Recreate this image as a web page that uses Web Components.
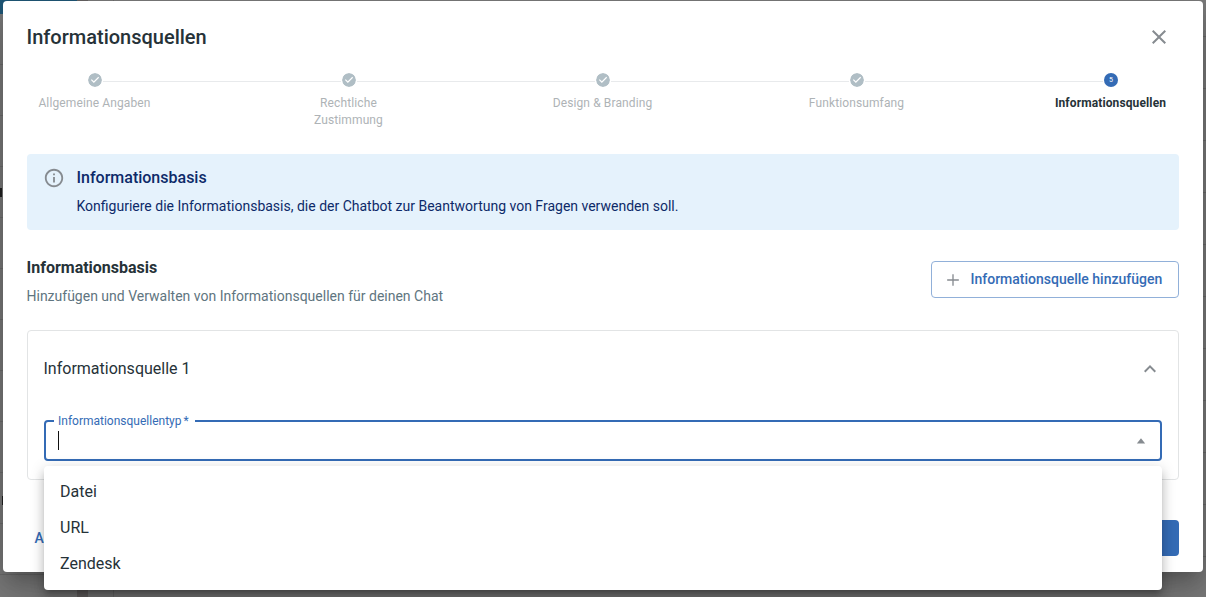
<!DOCTYPE html>
<html lang="de">
<head>
  <meta charset="utf-8">
  <title>Informationsquellen</title>
  <style>
    html, body {
      margin: 0;
      height: 100%;
      overflow: hidden;
    }

    body {
      font-family: Roboto, "Liberation Sans", sans-serif;
      color: #263238;
      --primary: #346bb5;
      --icon: #868b90;
    }
  </style>
</head>
<body>
  <page-backdrop>
    <modal-dialog heading="Informationsquellen">
      <step-progress>
        <step-item>Allgemeine Angaben</step-item>
        <step-item>Rechtliche Zustimmung</step-item>
        <step-item>Design &amp; Branding</step-item>
        <step-item>Funktionsumfang</step-item>
        <step-item number="5">Informationsquellen</step-item>
      </step-progress>
      <info-alert heading="Informationsbasis">Konfiguriere die Informationsbasis, die der Chatbot zur Beantwortung von Fragen verwenden soll.</info-alert>
      <section-header heading="Informationsbasis">
        Hinzufügen und Verwalten von Informationsquellen für deinen Chat
        <add-button slot="action">Informationsquelle hinzufügen</add-button>
      </section-header>
      <source-panel heading="Informationsquelle 1">
        <select-field label="Informationsquellentyp *">
          <menu-option>Datei</menu-option>
          <menu-option>URL</menu-option>
          <menu-option>Zendesk</menu-option>
        </select-field>
      </source-panel>
      <dialog-actions slot="footer">A</dialog-actions>
    </modal-dialog>
  </page-backdrop>

  <script>
    /**
     * Base class, renders the markup of the element in its shadow root
     */
    class BaseElement extends HTMLElement {
      connectedCallback() {
        if (this.shadowRoot) return;
        this.attachShadow({ mode: "open" });
        this.shadowRoot.innerHTML = this.render();
      }
    }

    /**
     * Dimmed page that lies behind the dialog
     */
    class PageBackdrop extends BaseElement {
      render() {
        return `
          <style>
            :host {
              display: block;
              position: relative;
              box-sizing: border-box;
              height: 597px;
              padding: 1px 3px 0;
              overflow: hidden;
              background: #7c7c7c;
            }

            .page {
              position: absolute;
              inset: 0;
              display: grid;
              grid-template-columns: 77px 11px 26px 1fr 3px;
            }

            .nav {
              background: repeating-linear-gradient(#7c7c7c 0 50px, #6e6e6e 50px 51px);
              border-top: 14px solid #205878;
            }

            .gutter {
              background: #686565;
            }

            .rail {
              border-right: 1px solid #6f6f6f;
            }

            .rows {
              grid-column: 5;
              background: repeating-linear-gradient(#7c7c7c 0 36px, #6a6a6a 36px 37px, #7c7c7c 37px 52px);
            }

            .mark {
              position: absolute;
              left: 0;
              width: 2px;
              height: 9px;
              background: #222;
            }
          </style>
          <div class="page">
            <div class="nav"></div>
            <div class="gutter"></div>
            <div class="rail"></div>
            <div></div>
            <div class="rows"></div>
            <i class="mark" style="top: 188px"></i>
            <i class="mark" style="top: 496px; left: 2px"></i>
          </div>
          <slot></slot>
        `;
      }
    }

    class ModalDialog extends BaseElement {
      render() {
        return `
          <style>
            :host {
              display: flex;
              flex-direction: column;
              position: relative;
              box-sizing: border-box;
              height: 571px;
              padding: 0 24px 16px;
              border-radius: 4px;
              background: #fff;
              box-shadow: 0 11px 15px -7px rgba(0,0,0,0.2), 0 24px 38px 3px rgba(0,0,0,0.14), 0 9px 46px 8px rgba(0,0,0,0.12);
            }

            header {
              display: flex;
              align-items: center;
              justify-content: space-between;
              height: 72px;
              padding-right: 8px;
            }

            h2 {
              margin: 0 0 0 -0.5px;
              font-size: 20px;
              font-weight: 500;
              line-height: 32px;
            }

            svg {
              width: 24px;
              height: 24px;
              fill: var(--icon);
            }

            footer {
              margin-top: auto;
            }
          </style>
          <header>
            <h2>${this.getAttribute("heading")}</h2>
            <svg viewBox="0 0 24 24"><path d="M19 6.41 17.59 5 12 10.59 6.41 5 5 6.41 10.59 12 5 17.59 6.41 19 12 13.41 17.59 19 19 17.59 13.41 12z"/></svg>
          </header>
          <slot></slot>
          <footer><slot name="footer"></slot></footer>
        `;
      }
    }

    class StepProgress extends BaseElement {
      render() {
        return `
          <style>
            :host {
              display: flex;
              justify-content: space-between;
              height: 81px;
            }
          </style>
          <slot></slot>
        `;
      }
    }

    /**
     * One step, it is active when it has a number and done otherwise
     */
    class StepItem extends BaseElement {
      render() {
        const number = this.getAttribute("number");
        const icon = number
          ? `<span class="number">${number}</span>`
          : `<svg viewBox="0 0 24 24"><path d="M12 0a12 12 0 1 0 0 24 12 12 0 0 0 0-24zm-2 17l-5-5 1.4-1.4 3.6 3.6 7.6-7.6L19 8l-9 9z"/></svg>`;
        return `
          <style>
            :host {
              display: flex;
              flex-direction: column;
              align-items: center;
              position: relative;
              box-sizing: border-box;
              width: 136px;
              padding: 0 8px;
              color: #aeb3b6;
              font-size: 12px;
              line-height: 17px;
              letter-spacing: 0.12px;
              text-align: center;
            }

            /* line back to the previous step */
            :host(:not(:first-child))::before {
              content: "";
              position: absolute;
              top: 8px;
              left: -178px;
              width: 238px;
              border-top: 1px solid #e8eaec;
            }

            :host([number]) {
              color: #263238;
              font-weight: 700;
            }

            svg, .number {
              width: 14px;
              height: 14px;
              margin-bottom: 8px;
              border-radius: 50%;
              fill: #b0bec5;
            }

            .number {
              background: var(--primary);
              color: #fff;
              font-size: 7px;
              font-weight: 400;
              line-height: 14px;
              letter-spacing: 0;
            }

            .label {
              max-width: 117px;
              margin-right: 1px;
            }
          </style>
          ${icon}
          <span class="label"><slot></slot></span>
        `;
      }
    }

    class InfoAlert extends BaseElement {
      render() {
        return `
          <style>
            :host {
              display: flex;
              gap: 12px;
              box-sizing: border-box;
              height: 76px;
              padding: 13px 16px;
              border-radius: 4px;
              background: #e5f2fc;
              color: #0d2a69;
              font-size: 14px;
              line-height: 20px;
            }

            svg {
              width: 22px;
              height: 22px;
              fill: var(--icon);
            }

            h3 {
              margin: 1px 0 8px;
              font-size: 16px;
              font-weight: 500;
              line-height: 20px;
            }

            div {
              margin-left: -0.5px;
            }
          </style>
          <svg viewBox="0 0 24 24"><path d="M11 7h2v2h-2zm0 4h2v6h-2zm1-9C6.48 2 2 6.48 2 12s4.48 10 10 10 10-4.48 10-10S17.52 2 12 2zm0 18c-4.41 0-8-3.59-8-8s3.59-8 8-8 8 3.59 8 8-3.59 8-8 8z"/></svg>
          <div>
            <h3>${this.getAttribute("heading")}</h3>
            <slot></slot>
          </div>
        `;
      }
    }

    class SectionHeader extends BaseElement {
      render() {
        return `
          <style>
            :host {
              display: flex;
              align-items: flex-start;
              justify-content: space-between;
              height: 73px;
              margin-top: 27px;
              color: #607580;
              font-size: 14px;
              line-height: 20px;
            }

            h3 {
              margin: 1px 0 8px;
              color: #263238;
              font-size: 16px;
              font-weight: 700;
              line-height: 20px;
            }

            div {
              margin-left: -0.5px;
            }
          </style>
          <div>
            <h3>${this.getAttribute("heading")}</h3>
            <slot></slot>
          </div>
          <slot name="action"></slot>
        `;
      }
    }

    class AddButton extends BaseElement {
      render() {
        return `
          <style>
            :host {
              display: flex;
              align-items: center;
              gap: 8px;
              box-sizing: border-box;
              width: 248px;
              height: 37px;
              margin-top: 4px;
              padding: 0 11px;
              border: 1px solid #91b0d9;
              border-radius: 4px;
              color: var(--primary);
              font-size: 14px;
              font-weight: 500;
              white-space: nowrap;
            }

            svg {
              width: 20px;
              height: 20px;
              fill: var(--icon);
            }

            span {
              margin: -1px 0 0 -0.5px;
            }
          </style>
          <svg viewBox="0 0 24 24"><path d="M19 12.8h-6.2V19h-1.6v-6.2H5v-1.6h6.2V5h1.6v6.2H19z"/></svg>
          <span><slot></slot></span>
        `;
      }
    }

    class SourcePanel extends BaseElement {
      render() {
        return `
          <style>
            :host {
              display: block;
              box-sizing: border-box;
              height: 150px;
              padding: 0 16px;
              border: 1px solid #e2e4e5;
              border-radius: 4px;
            }

            header {
              display: flex;
              align-items: center;
              justify-content: space-between;
              height: 76px;
              font-size: 16px;
            }

            span {
              margin: -2px 0 0 -0.5px;
            }

            svg {
              width: 24px;
              height: 24px;
              fill: var(--icon);
            }
          </style>
          <header>
            <span>${this.getAttribute("heading")}</span>
            <svg viewBox="0 0 24 24"><path d="M12 8l-6 6 1.41 1.41L12 10.83l4.59 4.58L18 14z"/></svg>
          </header>
          <slot></slot>
        `;
      }
    }

    /**
     * Outlined select with its option menu open
     */
    class SelectField extends BaseElement {
      render() {
        return `
          <style>
            :host {
              display: flex;
              align-items: center;
              justify-content: space-between;
              position: relative;
              box-sizing: border-box;
              height: 41px;
              margin-top: 13px;
              padding: 0 9px 0 12px;
              border: 2px solid var(--primary);
              border-radius: 4px;
            }

            label {
              position: absolute;
              top: -9px;
              left: 8px;
              box-sizing: border-box;
              width: 141px;
              padding-left: 4px;
              background: #fff;
              color: var(--primary);
              font-size: 12px;
              line-height: 16px;
              word-spacing: -1px;
              white-space: nowrap;
            }

            .caret {
              width: 1px;
              height: 19px;
              background: #111;
            }

            svg {
              width: 20px;
              height: 20px;
              fill: var(--icon);
            }

            .menu {
              position: absolute;
              z-index: 1;
              top: 44px;
              left: -2px;
              right: -2px;
              padding: 8px 0;
              border-radius: 4px;
              background: #fff;
              box-shadow: 0 5px 5px -3px rgba(0,0,0,0.2), 0 8px 10px 1px rgba(0,0,0,0.14), 0 3px 14px 2px rgba(0,0,0,0.12);
            }
          </style>
          <label>${this.getAttribute("label")}</label>
          <span class="caret"></span>
          <svg viewBox="0 0 24 24"><path d="M7 15l5-6.2 5 6.2z"/></svg>
          <div class="menu"><slot></slot></div>
        `;
      }
    }

    class MenuOption extends BaseElement {
      render() {
        return `
          <style>
            :host {
              display: block;
              padding: 0 16px;
              font-size: 16px;
              line-height: 36px;
            }
          </style>
          <slot></slot>
        `;
      }
    }

    class DialogActions extends BaseElement {
      render() {
        return `
          <style>
            :host {
              display: flex;
              align-items: center;
              justify-content: space-between;
              height: 36px;
              padding-left: 7.5px;
              color: var(--primary);
              font-size: 14px;
              font-weight: 500;
            }

            .submit {
              width: 90px;
              height: 36px;
              border-radius: 4px;
              background: var(--primary);
            }
          </style>
          <slot></slot>
          <div class="submit"></div>
        `;
      }
    }

    customElements.define("page-backdrop", PageBackdrop);
    customElements.define("modal-dialog", ModalDialog);
    customElements.define("step-progress", StepProgress);
    customElements.define("step-item", StepItem);
    customElements.define("info-alert", InfoAlert);
    customElements.define("section-header", SectionHeader);
    customElements.define("add-button", AddButton);
    customElements.define("source-panel", SourcePanel);
    customElements.define("select-field", SelectField);
    customElements.define("menu-option", MenuOption);
    customElements.define("dialog-actions", DialogActions);
  </script>
</body>
</html>
